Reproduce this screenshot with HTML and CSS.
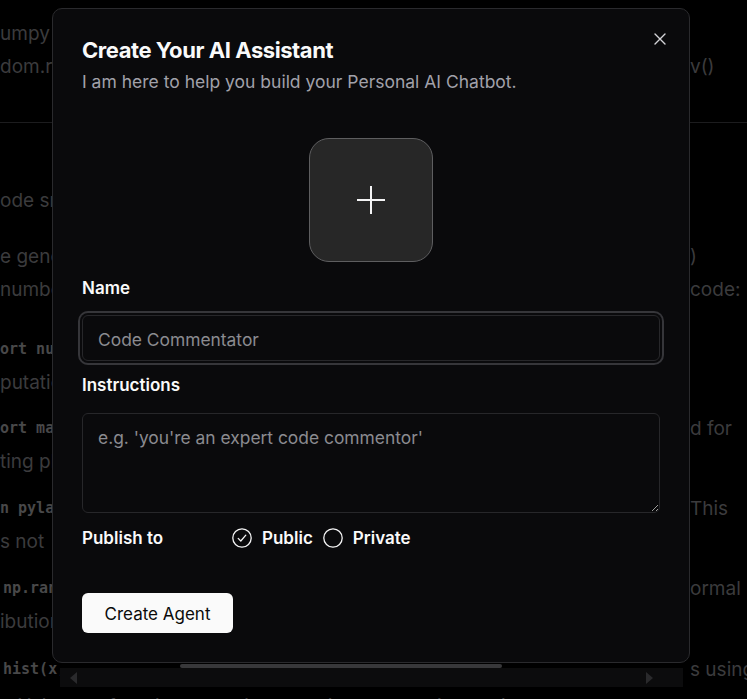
FILE: index.html
```html
<!DOCTYPE html>
<html lang="en">
<head>
<meta charset="utf-8">
<title>Create Your AI Assistant</title>
<link rel="stylesheet" href="styles.css">
</head>
<body>
<main class="page" aria-hidden="true">
  <div class="row first"><span class="l">umpy as np</span><span class="r"></span></div>
  <div class="row"><span class="l">dom.randn(1000)</span><span class="r">v()</span></div>
  <hr class="rule">
  <div class="row mt61"><span class="l">ode snippet generates</span><span class="r"></span></div>
  <div class="row mt23"><span class="l">e generates a histogram</span><span class="r">)</span></div>
  <div class="row"><span class="l">numbers drawn from</span><span class="r">code:</span></div>
  <div class="row mt27"><span class="l mono">ort numpy as np</span><span class="r"></span></div>
  <div class="row"><span class="l">putations</span><span class="r"></span></div>
  <div class="row mt13"><span class="l mono">ort matplotlib.pyplot</span><span class="r">d for</span></div>
  <div class="row"><span class="l">ting plots</span><span class="r"></span></div>
  <div class="row mt14"><span class="l mono">n pylab import</span><span class="r">This</span></div>
  <div class="row"><span class="l">s not</span><span class="r"></span></div>
  <div class="row mt14"><span class="l mono ind">np.random</span><span class="r">ormal</span></div>
  <div class="row"><span class="l">ibution</span><span class="r"></span></div>
  <div class="row mt15">
    <span class="l codecell">
      <span class="mono ind cut">hist(x, 10)</span>
      <span class="scroller">
        <span class="track"><span class="thumb"></span></span>
        <span class="band"><span class="arrow left"></span><span class="arrow right"></span></span>
      </span>
    </span>
    <span class="r">s using</span>
  </div>
  <div class="row mt4"><span class="l">utilizing the function. The histogram is created with 10 bins</span><span class="r">the</span></div>
</main>

<div class="modal" role="dialog" aria-labelledby="dlg-title">
  <button class="close" type="button" aria-label="Close">
    <svg width="12" height="12" viewBox="0 0 12 12" fill="none" stroke="#d4d4d8" stroke-width="1.4" stroke-linecap="round"><path d="M1 1 L11 11 M11 1 L1 11"/></svg>
  </button>
  <h2 class="title" id="dlg-title">Create Your AI Assistant</h2>
  <p class="sub">I am here to help you build your Personal AI Chatbot.</p>

  <div class="avatar-wrap">
    <button class="avatar" type="button" aria-label="Add avatar">
      <svg width="28" height="28" viewBox="0 0 28 28" fill="none" stroke="#f4f4f5" stroke-width="2"><path d="M14 0 V28 M0 14 H28"/></svg>
    </button>
  </div>

  <label class="lbl lbl-name" for="name">Name</label>
  <input class="field" id="name" type="text" placeholder="Code Commentator" autofocus>

  <label class="lbl lbl-ins" for="ins">Instructions</label>
  <textarea class="area" id="ins" placeholder="e.g. 'you're an expert code commentor'"></textarea>

  <div class="publish">
    <span class="pub-label">Publish to</span>
    <span class="opt">
      <svg class="radio" width="20" height="20" viewBox="0 0 20 20" fill="none" stroke="#f4f4f5" stroke-width="1.3"><circle cx="10" cy="10" r="9.2"/><path d="M6.2 10.4 L8.8 13 L13.8 7.2" stroke-linecap="round" stroke-linejoin="round"/></svg>
      <span>Public</span>
    </span>
    <span class="opt">
      <svg class="radio" width="20" height="20" viewBox="0 0 20 20" fill="none" stroke="#f4f4f5" stroke-width="1.3"><circle cx="10" cy="10" r="9.2"/></svg>
      <span>Private</span>
    </span>
  </div>

  <button class="create" type="button">Create Agent</button>
</div>
</body>
</html>
```

FILE: styles.css
```css
html, body {
  margin: 0;
  padding: 0;
  height: 100%;
  overflow: hidden;
  background: #000;
  color-scheme: dark;
}

body {
  font-family: Inter, "Noto Sans", sans-serif;
  position: relative;
}

/* background page */
.page {
  padding-top: 17px;
  color: #3b3b3d;
  font-size: 19px;
}

.row {
  display: grid;
  grid-template-columns: 688px 59px;
  height: 33px;
  line-height: 33px;
  white-space: nowrap;
}

.l, .r {
  overflow: hidden;
  display: block;
}

.r {
  padding-left: 2px;
}

.mono {
  font-family: "DejaVu Sans Mono", monospace;
  font-weight: bold;
  font-size: 15px;
  color: #484849;
}

.ind { padding-left: 3px; }

.mt4 { margin-top: 4px; }
.mt13 { margin-top: 13px; }
.mt14 { margin-top: 14px; }
.mt15 { margin-top: 15px; }
.mt23 { margin-top: 23px; }
.mt27 { margin-top: 27px; }
.mt61 { margin-top: 61px; }

.rule {
  margin: 39px 0 0;
  border: 0;
  height: 1px;
  background: #1c1c1e;
}

.codecell {
  display: flex;
  overflow: visible;
}

.cut {
  width: 57px;
  overflow: hidden;
  flex: none;
}

.scroller {
  width: 623px;
  flex: none;
  margin-top: 11px;
  display: flex;
  flex-direction: column;
}

.track {
  height: 4px;
  display: block;
}

.thumb {
  display: block;
  margin-left: 120px;
  width: 322px;
  height: 4px;
  border-radius: 2px;
  background: #38383a;
}

.band {
  display: flex;
  justify-content: space-between;
  align-items: center;
  height: 19px;
  background: #0c0c0d;
  padding: 0 30px 0 10px;
}

.arrow {
  width: 0;
  height: 0;
  border-top: 6px solid transparent;
  border-bottom: 6px solid transparent;
}
.arrow.left { border-right: 7px solid #2a2a2c; }
.arrow.right { border-left: 7px solid #2a2a2c; }

/* modal */
.modal {
  position: absolute;
  left: 52px;
  top: 8px;
  width: 638px;
  height: 655px;
  box-sizing: border-box;
  background: #0a0a0c;
  border: 1px solid #2a2a2d;
  border-radius: 10px;
  padding: 27px 29px 29px;
  color: #fafafa;
}

.close {
  position: absolute;
  top: 23px;
  right: 22px;
  width: 14px;
  height: 14px;
  padding: 1px;
  border: 0;
  background: none;
  display: flex;
}

.title {
  margin: 0;
  font-size: 22px;
  line-height: 28px;
  font-weight: 700;
  letter-spacing: -0.02em;
}

.sub {
  margin: 6px 0 0;
  font-size: 17.5px;
  line-height: 24px;
  color: #a1a1aa;
}

.avatar-wrap {
  display: flex;
  justify-content: center;
  margin-top: 44px;
}

.avatar {
  width: 124px;
  height: 124px;
  box-sizing: border-box;
  border-radius: 20px;
  background: #272727;
  border: 1px solid #5e5e60;
  display: flex;
  align-items: center;
  justify-content: center;
  padding: 0;
}

.lbl {
  display: block;
  font-size: 17px;
  line-height: 24px;
  font-weight: 600;
  color: #fafafa;
}
.lbl-name { margin-top: 14px; }
.lbl-ins { margin-top: 12px; }

.field {
  display: block;
  margin-top: 15px;
  width: 100%;
  height: 46px;
  box-sizing: border-box;
  background: #0a0a0c;
  border: 1px solid #27272a;
  border-radius: 6px;
  padding: 3px 15px 0;
  font: inherit;
  font-size: 17.4px;
  color: #fafafa;
  caret-color: #fafafa;
  outline: none;
  box-shadow: 0 0 0 2px #0a0a0c, 0 0 0 4px #36363a;
}

.area {
  display: block;
  margin-top: 16px;
  width: 100%;
  height: 100px;
  box-sizing: border-box;
  background: #0a0a0c;
  border: 1px solid #27272a;
  border-radius: 6px;
  padding: 12px 15px;
  font: inherit;
  font-size: 17.4px;
  line-height: 24px;
  color: #fafafa;
  resize: vertical;
  outline: none;
}

.field::placeholder, .area::placeholder {
  color: #8b8b90;
}

.publish {
  display: flex;
  align-items: center;
  margin-top: 13px;
  height: 24px;
  font-size: 17px;
  font-weight: 600;
}

.pub-label {
  width: 150px;
}

.opt {
  display: flex;
  align-items: center;
  gap: 10px;
  margin-right: 10px;
}

.radio { display: block; }

.create {
  display: block;
  margin-top: 43px;
  width: 151px;
  height: 40px;
  border: 0;
  border-radius: 6px;
  background: #fafafa;
  color: #0a0a0a;
  font: inherit;
  font-size: 17px;
  padding: 1px 0 0;
}
```
